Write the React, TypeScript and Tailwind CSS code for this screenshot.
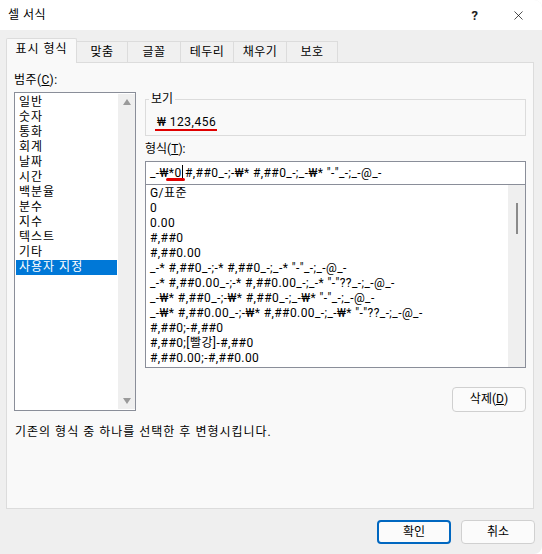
import { X } from "lucide-react";

const font = { fontFamily: 'Roboto, "Noto Sans CJK KR", "Liberation Sans", sans-serif' };

const tabs = [
  { label: "맞춤", width: "w-[52px]" },
  { label: "글꼴", width: "w-[54px]" },
  { label: "테두리", width: "w-[54px]" },
  { label: "채우기", width: "w-[54px]" },
  { label: "보호", width: "w-[52px]" },
];

const categories = ["일반", "숫자", "통화", "회계", "날짜", "시간", "백분율", "분수", "지수", "텍스트", "기타", "사용자 지정"];

const formats = [
  "G/표준",
  "0",
  "0.00",
  "#,##0",
  "#,##0.00",
  '_-* #,##0_-;-* #,##0_-;_-* "-"_-;_-@_-',
  '_-* #,##0.00_-;-* #,##0.00_-;_-* "-"??_-;_-@_-',
  '_-₩* #,##0_-;-₩* #,##0_-;_-₩* "-"_-;_-@_-',
  '_-₩* #,##0.00_-;-₩* #,##0.00_-;_-₩* "-"??_-;_-@_-',
  "#,##0;-#,##0",
  "#,##0;[빨강]-#,##0",
  "#,##0.00;-#,##0.00",
];

export default function App() {
  return (
    <div style={font} className="flex h-[554px] w-[542px] flex-col overflow-hidden rounded-br-lg rounded-tr-lg bg-[#efefef] text-[12px] leading-[15px] text-black">
      <header className="flex h-[30px] shrink-0 items-center justify-between bg-white pl-[8px] pr-[6px]">
        <span className="text-[12px] tracking-[0.5px]">셀 서식</span>
        <div className="flex items-center">
          <span className="mr-[33px] text-[13px] font-bold text-[#222]">?</span>
          <X size={15} strokeWidth={1.1} className="mr-[10px] text-black" />
        </div>
      </header>

      <div className="ml-[6px] mt-[8px] flex h-[24px] items-end">
        <div className="relative z-10 -mb-px flex h-[25px] w-[71px] items-center justify-center rounded-t-[2px] border border-b-0 border-[#dcdcdc] bg-[#f9f9f9] pb-[3px] tracking-[1px]">표시 형식</div>
        {tabs.map((tab) => (
          <div key={tab.label} className={`flex h-[21px] ${tab.width} -ml-px items-center justify-center border border-b-0 border-[#dcdcdc] bg-[#f0f0f0] tracking-[0.5px]`}>
            {tab.label}
          </div>
        ))}
      </div>

      <main className="ml-[6px] flex h-[447px] w-[528px] flex-col border border-[#dcdcdc] bg-[#f9f9f9] pl-[7px] pr-[7px] pt-[10px]">
        <div className="flex gap-[9px]">
          <section className="w-[122px]">
            <p className="h-[19px] tracking-[0.4px]">범주(<span className="underline">C</span>):</p>
            <div className="flex h-[319px] border border-[#8a8e99] bg-white pl-px pt-px">
              <ul className="w-[101px] pt-[1px] tracking-[1px]">
                {categories.map((item) => (
                  <li key={item} className={`h-[15px] pl-[3px] ${item === "사용자 지정" ? "bg-[#0078d7] text-white" : ""}`}>
                    {item}
                  </li>
                ))}
              </ul>
              <div className="mb-px ml-px flex w-[17px] flex-col items-center justify-between bg-[#efefef] py-[5px]">
                <span className="h-0 w-0 border-x-[4px] border-b-[6px] border-x-transparent border-b-[#9a9a9a]" />
                <span className="h-0 w-0 border-x-[4px] border-t-[6px] border-x-transparent border-t-[#9a9a9a]" />
              </div>
            </div>
          </section>

          <section className="flex w-[381px] flex-col pt-[26px]">
            <div className="relative h-[37px] border border-[#dcdcdc] pl-[9px]">
              <span className="absolute -top-[7px] left-[3px] bg-[#f9f9f9] px-[2px] leading-[12px]">보기</span>
              <p className="mt-[15px] w-fit border-b-[2px] border-[#e00000] pl-[2px] pr-px leading-[14px] tracking-[0.5px]">₩ 123,456</p>
            </div>

            <p className="mt-[6px] h-[19px]">형식(<span className="underline">T</span>):</p>

            <div className="relative flex h-[24px] items-center border border-[#8a8e99] bg-white pl-[4px] tracking-[0.42px]">
              <span className="whitespace-pre">{'_-₩*0 #,##0_-;-₩* #,##0_-;_-₩* "-"_-;_-@_-'}</span>
              <span className="absolute left-[36px] top-[3px] h-[16px] w-px bg-black" />
              <span className="absolute left-[20px] top-[16px] h-[3px] w-[19px] rounded-sm bg-[#e00000]" />
            </div>

            <div className="flex h-[183px] border border-t-0 border-[#8a8e99] bg-white">
              <ul className="flex-1 overflow-hidden pl-[4px] pt-[1px] tracking-[0.42px]">
                {formats.map((item) => (
                  <li key={item} className="h-[15px] whitespace-pre">
                    {item}
                  </li>
                ))}
              </ul>
              <div className="flex w-[17px] justify-center bg-[#efefef] pt-[18px]">
                <span className="h-[31px] w-[2px] bg-[#8a8a8a]" />
              </div>
            </div>

            <div className="mt-[19px] flex justify-end">
              <button className="h-[25px] w-[74px] rounded-[4px] border border-[#d0d0d0] bg-[#fbfbfb]">
                삭제(<span className="underline">D</span>)
              </button>
            </div>
          </section>
        </div>
        <p className="mt-[13px] pl-px tracking-[1px]">기존의 형식 중 하나를 선택한 후 변형시킵니다.</p>
      </main>

      <footer className="mt-[11px] flex justify-end gap-[10px] pr-[7px]">
        <button className="h-[24px] w-[74px] rounded-[4px] border-2 border-[#0067c0] bg-[#fbfbfb]">확인</button>
        <button className="h-[24px] w-[74px] rounded-[4px] border border-[#d0d0d0] bg-[#fbfbfb]">취소</button>
      </footer>
    </div>
  );
}
